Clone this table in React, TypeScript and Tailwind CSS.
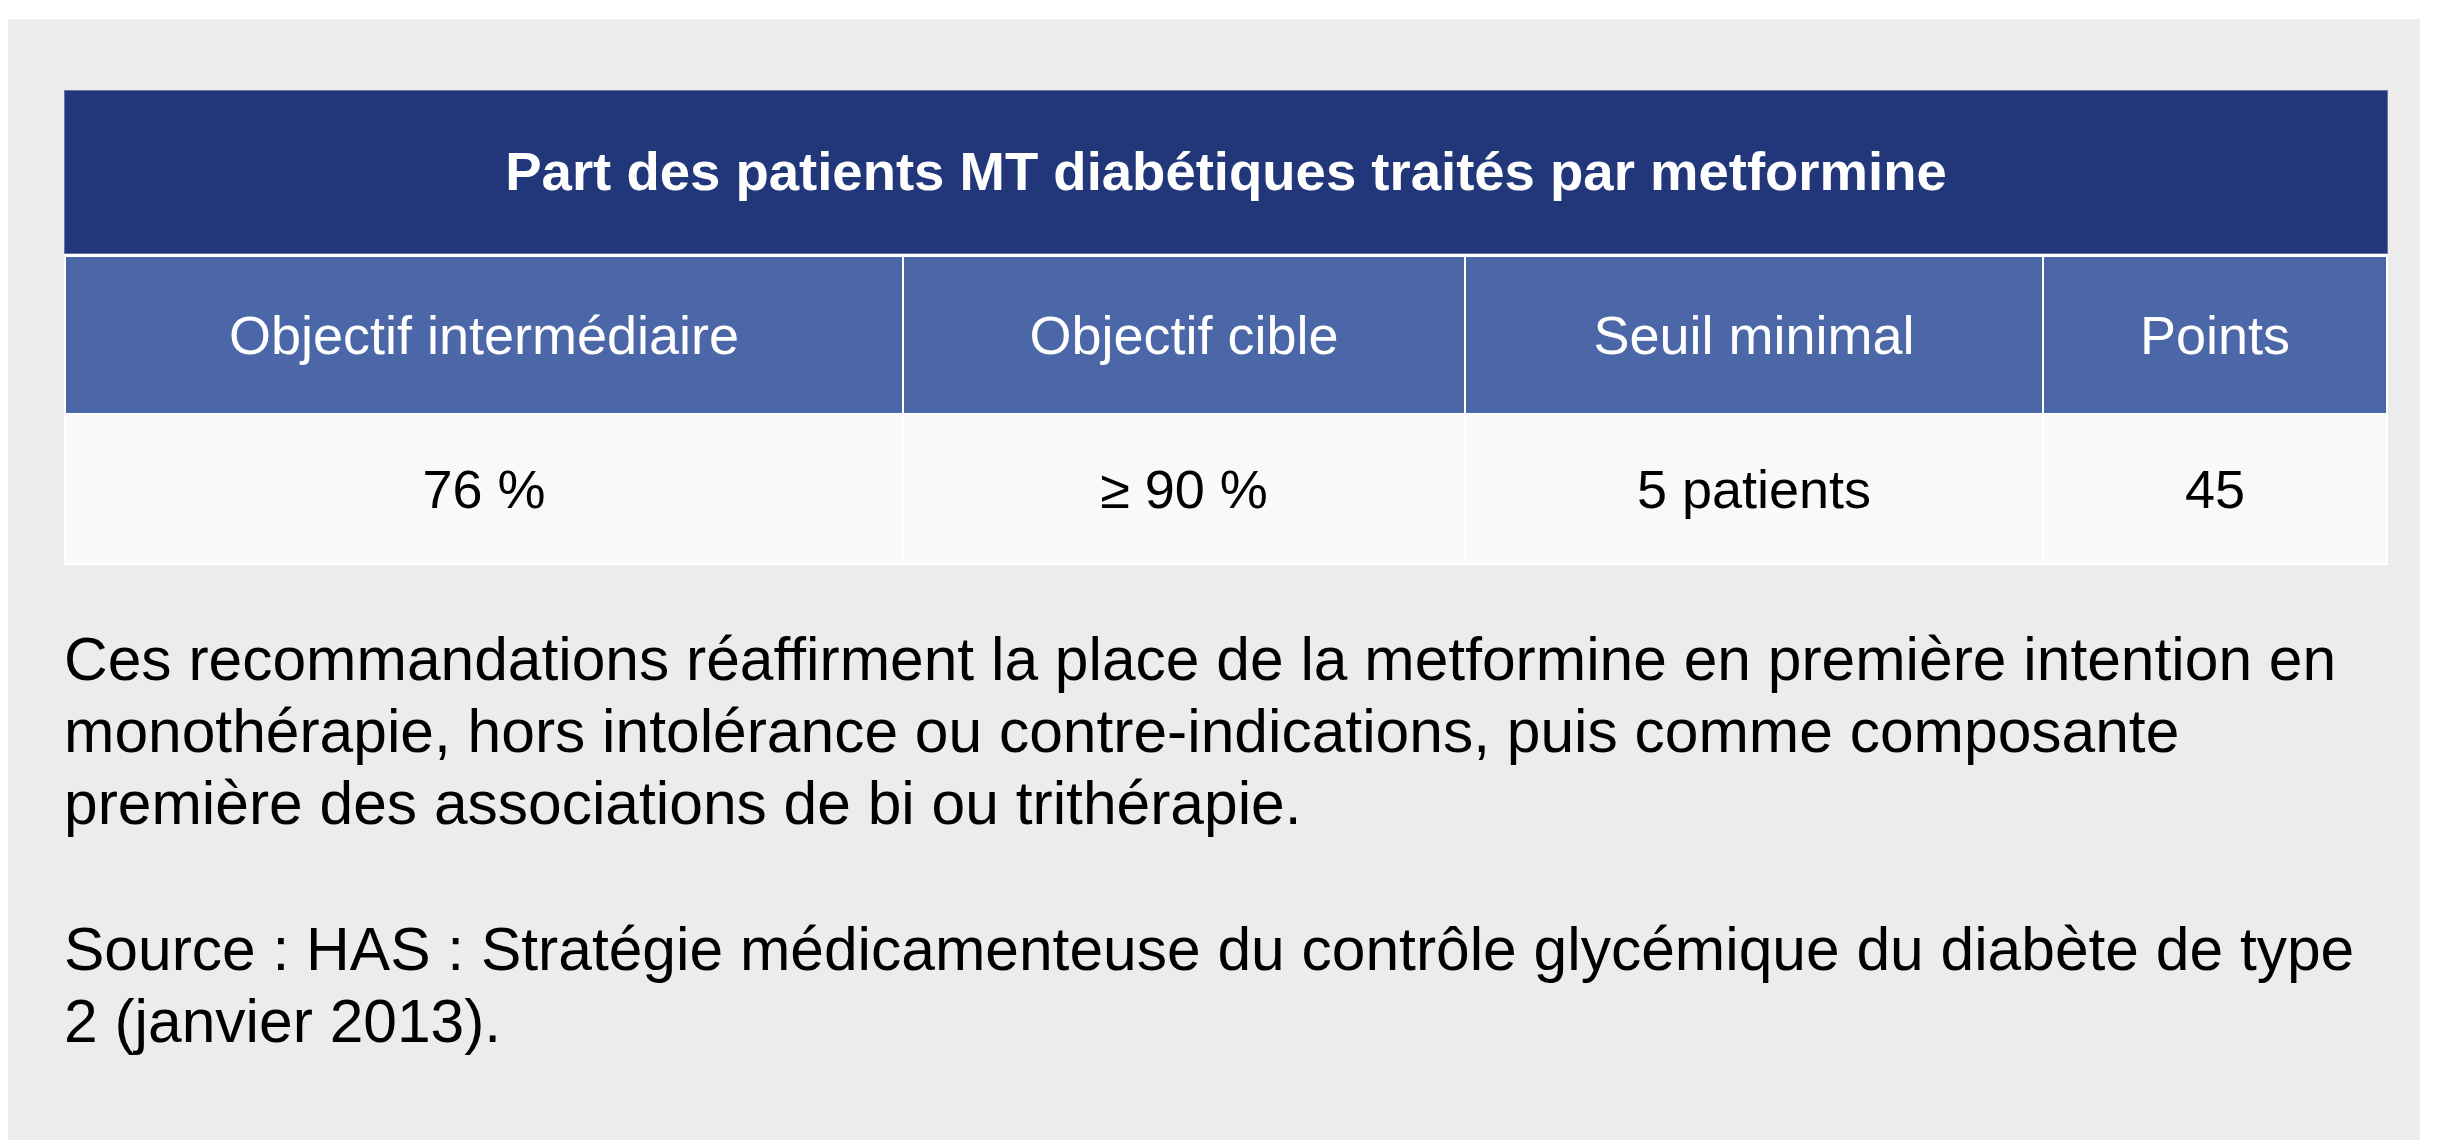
const columns = [
  { label: "Objectif intermédiaire", value: "76 %" },
  { label: "Objectif cible", value: "≥ 90 %" },
  { label: "Seuil minimal", value: "5 patients" },
  { label: "Points", value: "45" },
];

export default function App() {
  return (
    <div className="min-h-screen bg-white font-['Liberation_Sans',Arial,sans-serif]">
      <div className="ml-[8px] pt-[19px]">
        <section className="h-[1140px] w-[2412px] bg-[#ececec] pl-[56px] pr-[32px] pt-[71px]">
          {/* indicator table */}
          <div className="w-[2324px] bg-white">
            <div className="flex h-[164px] items-center justify-center border border-[#6677a8] bg-[#22377a] text-[54.5px] font-bold text-white">
              Part des patients MT diabétiques traités par metformine
            </div>
            <div className="grid grid-cols-[836px_560px_576px_342px] gap-[2px] px-[2px] pt-[3px] pb-[2px]">
              {columns.map((col) => (
                <div
                  key={col.label}
                  className="flex h-[156px] items-center justify-center bg-[#4b67a8] text-[54px] text-white"
                >
                  {col.label}
                </div>
              ))}
              {columns.map((col) => (
                <div
                  key={col.value}
                  className="flex h-[148px] items-center justify-center bg-[#f9f9f9] text-[54px] text-black"
                >
                  {col.value}
                </div>
              ))}
            </div>
          </div>

          <div className="w-[2324px] text-[60.5px] leading-[72px] text-black">
            <p className="mt-[58px]">
              Ces recommandations réaffirment la place de la metformine en
              première intention en monothérapie, hors intolérance ou
              contre-indications, puis comme composante première des
              associations de bi ou trithérapie.
            </p>
            <p className="mt-[74px]">
              Source : HAS : Stratégie médicamenteuse du contrôle glycémique du
              diabète de type 2 (janvier 2013).
            </p>
          </div>
        </section>
      </div>
    </div>
  );
}
